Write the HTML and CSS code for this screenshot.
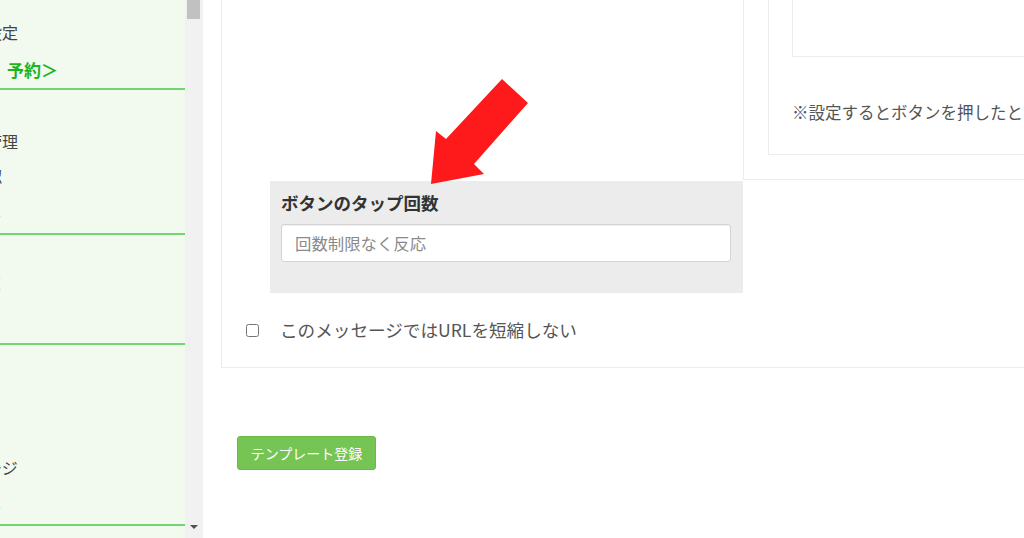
FILE: index.html
```html
<!DOCTYPE html>
<html lang="ja">
<head>
    <meta charset="utf-8">
    <link rel="stylesheet" href="styles.css">
</head>
<body>
    <div class="sidebar">
        <div class="side-scroll">
            <div class="side-group group-1">
                <div class="side-item">予約設定</div>
                <div class="side-item side-link">予約＞</div>
            </div>
            <div class="side-group group-2">
                <div class="side-item">予約管理</div>
                <div class="side-item side-cut">受付確認</div>
                <div class="side-item side-sub">一覧へ</div>
            </div>
            <div class="side-group group-3">
                <div class="side-item side-sub side-blue">設定</div>
            </div>
            <div class="side-group group-4">
                <div class="side-item">メッセージ</div>
                <div class="side-item side-sub">一覧へ</div>
            </div>
        </div>
        <div class="scrollbar">
            <div class="scroll-thumb"></div>
            <div class="scroll-down"></div>
        </div>
    </div>

    <div class="main">
        <div class="panel">
            <div class="panel-row">
                <div class="col-left">
                    <div class="col-left-top"></div>
                    <div class="tap-box">
                        <div class="tap-title">ボタンのタップ回数</div>
                        <input class="tap-input" type="text" placeholder="回数制限なく反応">
                    </div>
                </div>
                <div class="col-right">
                    <div class="option-panel">
                        <div class="option-field"></div>
                        <div class="option-note">※設定するとボタンを押したときに</div>
                    </div>
                </div>
            </div>
            <label class="check-row">
                <input type="checkbox" class="check">
                <span class="check-label">このメッセージではURLを短縮しない</span>
            </label>
        </div>

        <button class="btn-submit" type="button">テンプレート登録</button>

        <svg class="arrow" width="120" height="120" viewBox="420 70 120 120">
            <polygon points="502,79 528,103 474,164 484,174 431,184 436,131 446,139" fill="#fe1a1a"/>
        </svg>
    </div>
</body>
</html>
```

FILE: styles.css
```css
html, body {
    height: 100%;
}
body {
    font-family: 'Noto Sans CJK JP', 'Noto Sans', sans-serif;
    margin: 0;
    padding: 0;
    background: white;
    color: #555;
    display: flex;
    overflow: hidden;
}

/* sidebar */
.sidebar {
    width: 203px;
    flex-shrink: 0;
    display: flex;
    height: 538px;
}
.side-scroll {
    width: 185px;
    background: #f2faf0;
    overflow: hidden;
}
.side-group {
    border-bottom: 2px solid #74d474;
}
.group-1 {
    padding-top: 14px;
    height: 74px;
}
.group-2 {
    padding-top: 34px;
    padding-bottom: 4px;
}
.group-3 {
    padding-top: 30px;
    padding-bottom: 43px;
}
.group-4 {
    padding-top: 104px;
    padding-bottom: 3px;
}
.side-item {
    font-size: 16px;
    height: 35px;
    line-height: 35px;
    white-space: nowrap;
    margin-left: -46px;
    color: #444;
}
.group-1 .side-item,
.group-4 .side-item {
    height: 36px;
    line-height: 36px;
}
.side-item.side-link {
    margin-left: 7px;
    font-size: 17px;
    font-weight: bold;
    color: #1db41d;
    height: 38px;
    line-height: 40px;
}
.side-cut {
    margin-left: -62px;
}
.side-sub {
    color: #4cc3d9;
    margin-left: -47px;
}
.side-blue {
    color: #6f9bd6;
    margin-left: -31px;
}
.group-4 .side-item:first-child {
    margin-left: -62px;
}
.scrollbar {
    width: 18px;
    background: #f1f1f1;
    display: flex;
    flex-direction: column;
    justify-content: space-between;
    align-items: center;
    padding-bottom: 9px;
    box-sizing: border-box;
}
.scroll-thumb {
    width: 13px;
    height: 19px;
    background: #c1c1c1;
    margin-left: -1px;
}
.scroll-down {
    width: 0;
    height: 0;
    border-left: 4px solid transparent;
    border-right: 4px solid transparent;
    border-top: 4px solid #505050;
    margin-left: -1px;
}

/* main */
.main {
    flex: 1;
    padding-left: 18px;
    position: relative;
    min-width: 0;
}
.panel {
    width: 900px;
    border: 1px solid #ececec;
    border-top: none;
}
.panel-row {
    display: flex;
    align-items: flex-start;
}
.col-left {
    width: 521px;
    flex-shrink: 0;
}
.col-left-top {
    height: 181px;
}
.tap-box {
    margin-left: 48px;
    background: #ececec;
    padding: 10px 12px 31px 11px;
}
.tap-title {
    font-size: 17.5px;
    font-weight: bold;
    color: #333;
    line-height: 24px;
    margin-bottom: 9px;
}
.tap-input {
    display: block;
    width: 100%;
    height: 38px;
    box-sizing: border-box;
    border: 1px solid #d4d4d4;
    border-radius: 3px;
    background: white;
    padding: 0 13px;
    font-family: inherit;
    font-size: 16.4px;
    color: #555;
    box-shadow: inset 0 1px 1px rgba(0,0,0,0.06);
}
.tap-input::placeholder {
    color: #8a8a8a;
}
.col-right {
    flex: 1;
    border-left: 1px solid #ececec;
    border-bottom: 1px solid #ececec;
    padding: 0 0 24px 24px;
}
.option-panel {
    border: 1px solid #ececec;
    border-top: none;
    padding: 0 0 30px 23px;
}
.option-field {
    height: 56px;
    border: 1px solid #ececec;
    border-top: none;
}
.option-note {
    margin-top: 43px;
    font-size: 16.5px;
    line-height: 24px;
    white-space: nowrap;
    color: #555;
}
.check-row {
    display: flex;
    align-items: center;
    padding: 25px 0 25px 24px;
    line-height: 24px;
}
.check {
    width: 13px;
    height: 13px;
    margin: 0;
}
.check-label {
    margin-left: 21px;
    font-size: 17.6px;
    color: #555;
}
.btn-submit {
    margin: 68px 0 0 16px;
    width: 139px;
    height: 34px;
    background: #76c453;
    border: 1px solid #6cb94b;
    border-radius: 3px;
    color: white;
    font-family: inherit;
    font-size: 14px;
    padding: 0;
}
.arrow {
    position: absolute;
    left: 217px;
    top: 70px;
}
```
